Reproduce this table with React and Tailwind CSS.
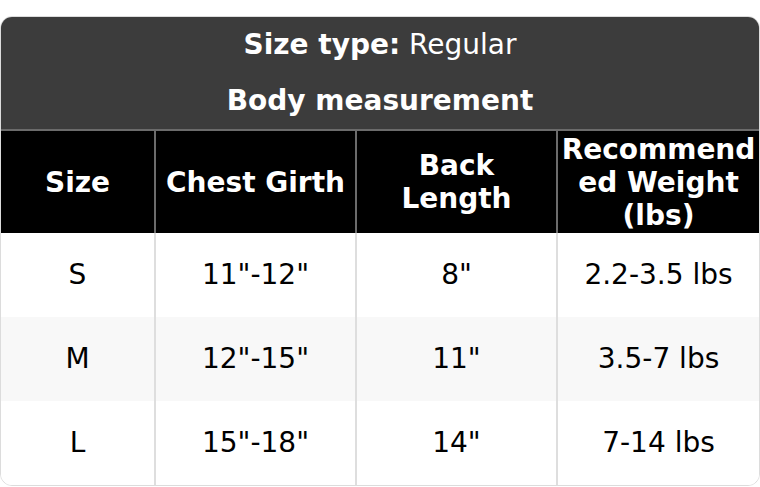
import React from 'react';

const heads = ['Size', 'Chest Girth', 'Back Length', 'Recommended Weight (lbs)'];
const rows = [
  ['S', '11"-12"', '8"', '2.2-3.5 lbs'],
  ['M', '12"-15"', '11"', '3.5-7 lbs'],
  ['L', '15"-18"', '14"', '7-14 lbs'],
];

const cols = 'grid grid-cols-[153px_201px_201px_1fr]';

export default function App() {
  return (
    <div className="bg-white pt-4 font-['DejaVu_Sans',sans-serif] text-[28px]">
      <div className="overflow-hidden rounded-[12px] border border-[#dcdcdc]">
        {/* title block */}
        <div className="bg-[#3c3c3c] text-white text-center">
          <div className="h-[56px] flex items-center justify-center">
            <span><b>Size type:</b> Regular</span>
          </div>
          <div className="h-[56px] flex items-center justify-center font-bold">
            Body measurement
          </div>
        </div>

        {/* header row */}
        <div className={`${cols} h-[104px] bg-black text-white font-bold border-t-2 border-[#6b6b6b] leading-[33px]`}>
          {heads.map((h, i) => (
            <div
              key={h}
              className={`flex items-center justify-center text-center px-[3px] wrap-anywhere ${
                i > 0 ? 'border-l-2 border-[#6b6b6b]' : ''
              }`}
            >
              {h}
            </div>
          ))}
        </div>

        {/* body */}
        {rows.map((r, ri) => (
          <div
            key={r[0]}
            className={`${cols} h-[84px] text-black ${ri === 1 ? 'bg-[#f8f8f8]' : 'bg-white'}`}
          >
            {r.map((c, i) => (
              <div
                key={i}
                className={`flex items-center justify-center ${
                  i > 0 ? 'border-l-2 border-[#dedede]' : ''
                }`}
              >
                {c}
              </div>
            ))}
          </div>
        ))}
      </div>
    </div>
  );
}
